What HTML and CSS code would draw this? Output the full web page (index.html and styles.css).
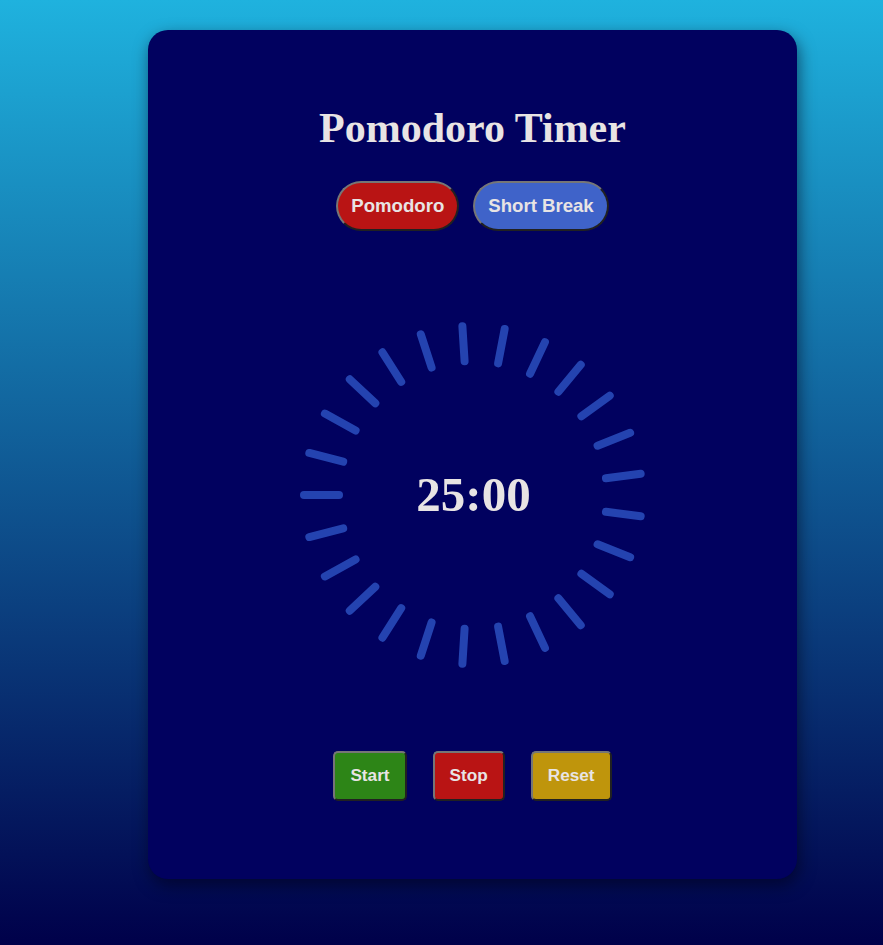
FILE: index.html
```html
<!DOCTYPE html>
<html lang="en">
<head>
<meta charset="utf-8">
<title>Pomodoro Timer</title>
<link rel="stylesheet" href="styles.css">
</head>
<body>
<div class="card">
  <h1 class="title">Pomodoro Timer</h1>
  <div class="modes">
    <button class="mode mode-pomodoro">Pomodoro</button>
    <button class="mode mode-short">Short Break</button>
  </div>
  <div class="dial">
    <svg class="ring" width="360" height="360" viewBox="-180 -180 360 360" id="ring"></svg>
    <div class="time">25:00</div>
  </div>
  <div class="controls">
    <button class="ctl ctl-start">Start</button>
    <button class="ctl ctl-stop">Stop</button>
    <button class="ctl ctl-reset">Reset</button>
  </div>
</div>
<script src="script.js"></script>
</body>
</html>
```

FILE: styles.css
```css
html, body {
  margin: 0;
  padding: 0;
}
body {
  min-height: 945px;
  background: linear-gradient(to bottom, #1fb2de 0%, #00004a 100%);
  font-family: "Liberation Sans", Arial, sans-serif;
  overflow: hidden;
}
.card {
  box-sizing: border-box;
  width: 649px;
  height: 849px;
  margin: 30px 0 0 148px;
  padding-top: 75px;
  background: #01015f;
  border-radius: 20px;
  box-shadow: 2px 6px 16px rgba(0, 0, 20, 0.55);
  display: flex;
  flex-direction: column;
  align-items: center;
}
.title {
  margin: 0;
  font-family: "Liberation Serif", "Times New Roman", serif;
  font-weight: bold;
  font-size: 42px;
  line-height: 47px;
  color: #e8e4e4;
}
.modes {
  margin-top: 29px;
  display: flex;
  gap: 14px;
}
.mode {
  font-family: "Liberation Sans", Arial, sans-serif;
  font-weight: bold;
  font-size: 18.6px;
  line-height: 22px;
  padding: 12px 13px;
  border: 2px outset #767676;
  border-radius: 25px;
  color: #e8e4e4;
}
.mode-pomodoro { background: #b91414; }
.mode-short { background: #3f63c9; }
.dial {
  position: relative;
  width: 360px;
  height: 360px;
  margin-top: 84px;
  display: flex;
  align-items: center;
  justify-content: center;
}
.ring {
  position: absolute;
  left: 0;
  top: 0;
}
.tick {
  stroke: #2443b0;
  stroke-width: 8;
  stroke-linecap: round;
}
.time {
  position: relative;
  font-family: "Liberation Serif", "Times New Roman", serif;
  font-weight: bold;
  font-size: 49px;
  color: #e8e4e4;
  margin-left: 2px;
  margin-top: -2px;
}
.controls {
  margin-top: 76px;
  display: flex;
  gap: 26px;
}
.ctl {
  font-family: "Liberation Sans", Arial, sans-serif;
  font-weight: bold;
  font-size: 17.2px;
  line-height: 21px;
  padding: 12px 15px 13px;
  border: 2px outset #767676;
  border-radius: 5px;
  color: #e8e4e4;
}
.ctl-start { background: #2d8517; }
.ctl-stop { background: #b91414; }
.ctl-reset { background: #bf950c; }
```

FILE: script.js
```js
(function () {
  var svg = document.getElementById('ring');
  var ns = 'http://www.w3.org/2000/svg';
  var n = 25;
  for (var i = 0; i < n; i++) {
    var a = (270 + i * 360 / n) * Math.PI / 180;
    var sx = Math.sin(a), sy = -Math.cos(a);
    var r1 = 134, r2 = 169;
    var l = document.createElementNS(ns, 'line');
    l.setAttribute('class', 'tick');
    l.setAttribute('x1', (sx * r1).toFixed(2));
    l.setAttribute('y1', (sy * r1).toFixed(2));
    l.setAttribute('x2', (sx * r2).toFixed(2));
    l.setAttribute('y2', (sy * r2).toFixed(2));
    svg.appendChild(l);
  }
})();
```
